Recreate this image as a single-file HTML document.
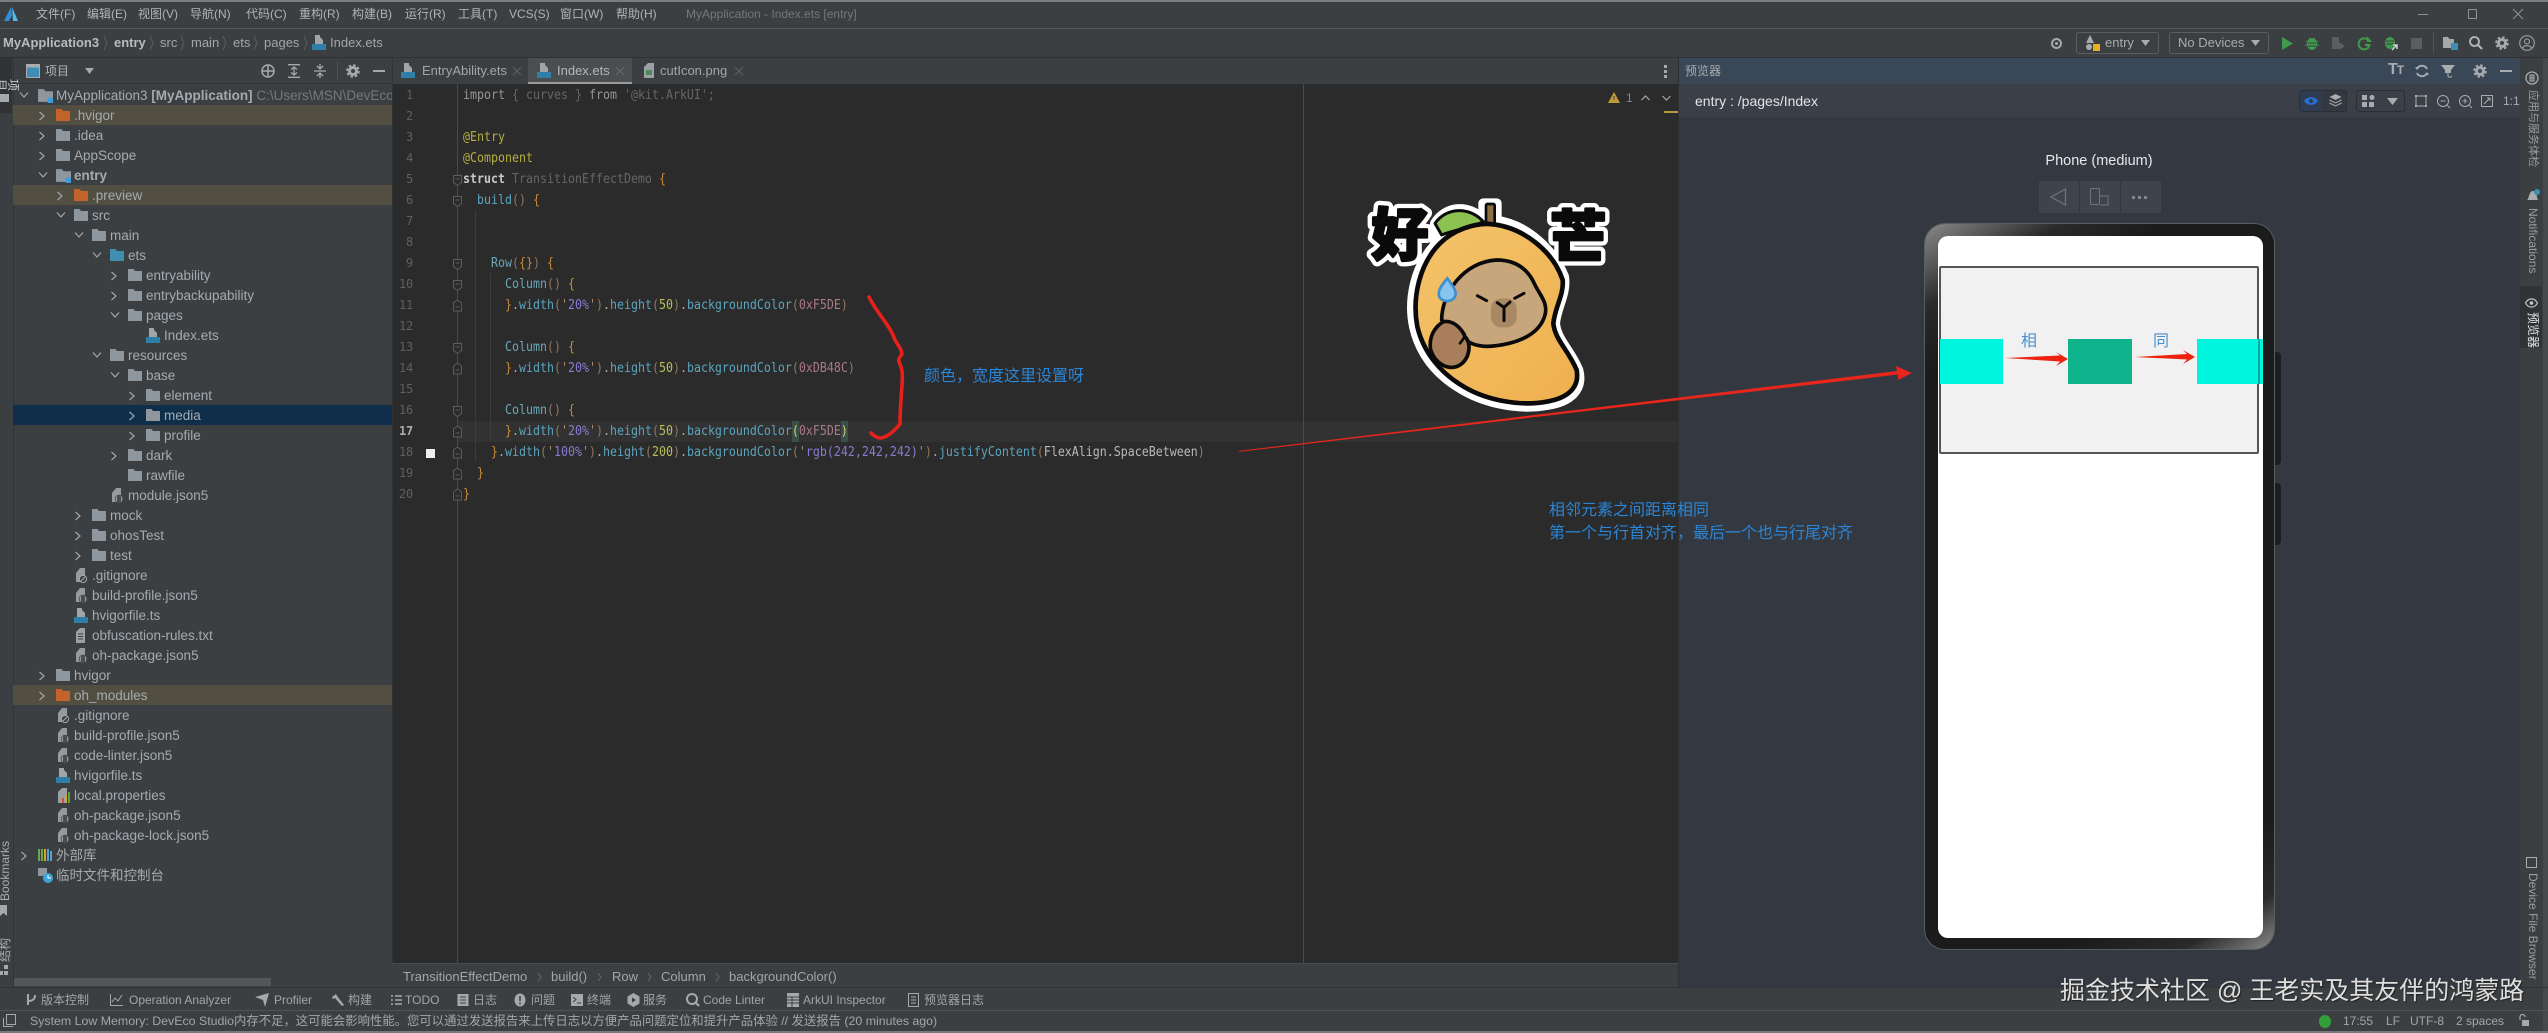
<!DOCTYPE html>
<html lang="zh"><head><meta charset="utf-8"><title>DevEco Studio</title>
<style>
*{box-sizing:border-box}
html,body{margin:0;padding:0}
body{width:2548px;height:1033px;position:relative;overflow:hidden;background:#3c3f41;font-family:"Liberation Sans","Noto Sans CJK SC",sans-serif;color:#a9b0b5}
.a{position:absolute;white-space:nowrap;line-height:20px}
.b{position:absolute}
svg{position:absolute;overflow:visible}
.m{font-size:12px;color:#b1b4b6;top:4px}
.c{font-size:13px;color:#a3a6a8;top:33px}
.tb{font-size:12px;color:#a3a6a8;top:990px}
#tree{position:absolute;left:13px;top:85px;width:379px}
.r{height:20px;position:relative;font-size:13.5px;line-height:22px;white-space:nowrap;color:#a4abb0}
.r.y{background:#524e41}
.r.s{background:#0e2e49}
.r>span{position:absolute;left:calc(var(--x) - 13px)}
.r>svg{left:calc(var(--x) - 31px);top:3px}
.r>svg.ch{left:calc(var(--x) - 49px);top:6px}
#code{position:absolute;left:463px;top:85px;font-family:"DejaVu Sans Mono","Liberation Mono",monospace;font-size:13px;line-height:21px;white-space:pre;transform:scaleX(.894);transform-origin:0 0;color:#a9a9a9}
#nums{position:absolute;left:392px;top:85px;width:21px;text-align:right;font-family:"DejaVu Sans Mono","Liberation Mono",monospace;font-size:12px;line-height:21px;color:#5d6063;letter-spacing:-.2px}
.o{color:#c98b3b}.t{color:#6ba6b6}.w{color:#5ba4bd}.p{color:#8a7bd0}.n{color:#b6c05a}.q{color:#b48a68}.h{color:#a97a86}.g{color:#94775e}.d{color:#666}.e{color:#b3ae3e}.f{color:#a8a8a8}
.vr{position:absolute;writing-mode:vertical-rl;text-orientation:sideways;white-space:nowrap;font-size:12px;line-height:14px;color:#9a9da0}
.vl{position:absolute;writing-mode:vertical-rl;text-orientation:sideways;transform:rotate(180deg);white-space:nowrap;font-size:12px;line-height:12px;color:#a9acae}
</style></head><body>

<svg width="0" height="0" style="position:absolute"><defs>
<symbol id="fd" viewBox="0 0 14 14"><path d="M0 1h5.500l1.500 2H14v10H0z" fill="#8e979d"/></symbol>
<symbol id="fo" viewBox="0 0 14 14"><path d="M0 1h5.500l1.500 2H14v10H0z" fill="#c4622c"/></symbol>
<symbol id="fb" viewBox="0 0 14 14"><path d="M0 1h5.500l1.500 2H14v10H0z" fill="#3f8fae"/></symbol>
<symbol id="fm" viewBox="0 0 14 14"><path d="M0 1h5.500l1.500 2H14v10H0z" fill="#8e979d"/><rect x="9" y="9" width="5.500" height="5.500" fill="#3d9bdc"/></symbol>
<symbol id="ets" viewBox="0 0 14 16"><path d="M3 0h5v9H3z M8 2l3 3v4H8z" fill="#a0a5a9"/><rect x="0" y="9" width="14" height="6" fill="#2f7ea5"/></symbol>
<symbol id="js" viewBox="0 0 14 16"><path d="M2 5l4-5h5v8H2z M2 8h9v6H2z" fill="#949a9e"/><circle cx="9" cy="11" r="4.200" fill="#4a4d4f"/><path d="M7 8.500c-1 1 0 2-1 2.500 1 .5 0 1.500 1 2.500M11 8.500c1 1 0 2 1 2.500-1 .5 0 1.500-1 2.500" stroke="#bbb" fill="none" stroke-width=".7"/></symbol>
<symbol id="gi" viewBox="0 0 14 16"><path d="M2 5l4-5h5v8H2z M2 8h9v6H2z" fill="#949a9e"/><circle cx="9" cy="11" r="3.600" fill="#3c3f41" stroke="#aaa"/><path d="M7 13l4-4" stroke="#aaa"/></symbol>
<symbol id="ts" viewBox="0 0 14 16"><path d="M3 0h5v9H3z M8 2l3 3v4H8z" fill="#a0a5a9"/><rect x="0" y="9" width="15" height="6" fill="#2f7ea5"/></symbol>
<symbol id="tx" viewBox="0 0 14 16"><path d="M2 4l4-4h5v15H2z" fill="#9aa0a4"/><path d="M4 6h5M4 8.500h5M4 11h5" stroke="#3c3f41"/></symbol>
<symbol id="lp" viewBox="0 0 14 16"><path d="M2 4l4-4h5v15H2z" fill="#9aa0a4"/><rect x="6" y="10" width="2" height="5" fill="#d0502b"/><rect x="9" y="7" width="2" height="8" fill="#e2a424"/><rect x="12" y="4" width="2" height="11" fill="#5aa63f"/></symbol>
<symbol id="png" viewBox="0 0 14 16"><path d="M2 4l4-4h6v15H2z" fill="#9aa0a4"/><rect x="4" y="7" width="6" height="5" fill="#4c8a5a"/></symbol>
<symbol id="cr" viewBox="0 0 8 10"><path d="M1.500 1l4.500 4-4.500 4" fill="none" stroke="#a3a6a8" stroke-width="1.200"/></symbol>
<symbol id="cd" viewBox="0 0 10 8"><path d="M1 1.500l4 4.500 4-4.500" fill="none" stroke="#a3a6a8" stroke-width="1.200"/></symbol>
<symbol id="gear" viewBox="0 0 14 14"><circle cx="7" cy="7" r="3.500" fill="none" stroke="#a6a9ab" stroke-width="3"/><circle cx="7" cy="7" r="5.800" fill="none" stroke="#a6a9ab" stroke-width="2" stroke-dasharray="2.500 2.050"/></symbol>
</defs></svg>

<!-- top chrome -->
<div class="b" style="left:0;top:0;width:2548px;height:2px;background:#7a7c7e"></div>
<div class="b" style="left:0;top:28px;width:2548px;height:1px;background:#555759"></div>
<div class="b" style="left:0;top:57px;width:2548px;height:1px;background:#2e3032"></div>

<svg style="left:3px;top:6px" width="17" height="17" viewBox="0 0 17 17"><path d="M8 1L1 15h5l3-6z" fill="#2f8fd8"/><path d="M9 1l6 14h-5z" fill="#58b7ea"/></svg>
<div class="a m" style="left:36px">文件(F)</div><div class="a m" style="left:87px">编辑(E)</div><div class="a m" style="left:138px">视图(V)</div><div class="a m" style="left:190px">导航(N)</div><div class="a m" style="left:246px">代码(C)</div><div class="a m" style="left:299px">重构(R)</div><div class="a m" style="left:352px">构建(B)</div><div class="a m" style="left:405px">运行(R)</div><div class="a m" style="left:458px">工具(T)</div><div class="a m" style="left:509px">VCS(S)</div><div class="a m" style="left:560px">窗口(W)</div><div class="a m" style="left:616px">帮助(H)</div>
<div class="a m" style="left:686px;color:#75787a">MyApplication - Index.ets [entry]</div>
<div class="b" style="left:2418px;top:14px;width:10px;height:1px;background:#8f9193"></div>
<div class="b" style="left:2468px;top:9px;width:9px;height:10px;border:1px solid #8f9193"></div>
<svg style="left:2513px;top:9px" width="10" height="10"><path d="M0 0l10 10M10 0L0 10" stroke="#8f9193"/></svg>

<div class="a c" style="left:3px;font-weight:bold;color:#b8babc">MyApplication3</div><div class="a c" style="left:114px;font-weight:bold;color:#b8babc">entry</div><div class="a c" style="left:160px">src</div><div class="a c" style="left:191px">main</div><div class="a c" style="left:233px">ets</div><div class="a c" style="left:264px">pages</div>
<svg style="left:312px;top:35px" width="14" height="16"><use href="#ets"/></svg><div class="a c" style="left:330px">Index.ets</div>
<svg style="left:103px;top:36px" width="6" height="14"><path d="M1 0l3 7-3 7" fill="none" stroke="#5a5d5f"/></svg><svg style="left:149px;top:36px" width="6" height="14"><path d="M1 0l3 7-3 7" fill="none" stroke="#5a5d5f"/></svg><svg style="left:180px;top:36px" width="6" height="14"><path d="M1 0l3 7-3 7" fill="none" stroke="#5a5d5f"/></svg><svg style="left:222px;top:36px" width="6" height="14"><path d="M1 0l3 7-3 7" fill="none" stroke="#5a5d5f"/></svg><svg style="left:253px;top:36px" width="6" height="14"><path d="M1 0l3 7-3 7" fill="none" stroke="#5a5d5f"/></svg><svg style="left:303px;top:36px" width="6" height="14"><path d="M1 0l3 7-3 7" fill="none" stroke="#5a5d5f"/></svg>

<!-- top right toolbar -->
<svg style="left:2050px;top:37px" width="13" height="13"><circle cx="6.500" cy="6.500" r="4.500" fill="none" stroke="#a6a9ab" stroke-width="2"/><circle cx="6.500" cy="6.500" r="1.500" fill="#a6a9ab"/></svg>
<div class="b" style="left:2076px;top:32px;width:83px;height:22px;border:1px solid #5b5e60;border-radius:3px"></div>
<svg style="left:2085px;top:35px" width="16" height="17"><path d="M5 0l4 8H1z" fill="#a9acae"/><circle cx="4" cy="12" r="3" fill="#a9acae"/><rect x="8" y="9" width="7" height="7" fill="#e8b01f"/></svg>
<div class="a" style="left:2105px;top:33px;font-size:13px;color:#a9acae">entry</div>
<svg style="left:2141px;top:40px" width="10" height="7"><path d="M0 0h9L4.500 6z" fill="#a9acae"/></svg>
<div class="b" style="left:2169px;top:32px;width:100px;height:22px;border:1px solid #5b5e60;border-radius:3px"></div>
<div class="a" style="left:2178px;top:33px;font-size:13px;color:#a9acae">No Devices</div>
<svg style="left:2251px;top:40px" width="10" height="7"><path d="M0 0h9L4.500 6z" fill="#a9acae"/></svg>
<svg style="left:2282px;top:37px" width="11" height="13"><path d="M0 0l11 6.500L0 13z" fill="#3f9a4b"/></svg>
<svg style="left:2305px;top:36px" width="14" height="14"><ellipse cx="7" cy="8" rx="5" ry="6" fill="#3f9a4b"/><path d="M1 5l3 2M13 5l-3 2M0 9h3M14 9h-3M4 2l2 2M10 2L8 4" stroke="#3f9a4b"/><path d="M3 7h8M3 10h8" stroke="#3c3f41"/></svg>
<svg style="left:2331px;top:36px" width="15" height="15"><path d="M1 1h7v12H1z" fill="#5b5e60"/><path d="M8 6l6 4-6 4z" fill="#5b5e60"/></svg>
<svg style="left:2357px;top:36px" width="15" height="15"><path d="M11 4A5.500 5.500 0 1 0 12.500 9H8" fill="none" stroke="#3f9a4b" stroke-width="2"/><path d="M10 0v6h5z" fill="#3f9a4b"/></svg>
<svg style="left:2384px;top:36px" width="15" height="15"><ellipse cx="6" cy="7" rx="5" ry="6" fill="#3f9a4b"/><path d="M2 5h8M2 8h8" stroke="#3c3f41"/><path d="M8 14l5-5M9 9h4v4" stroke="#d0d2d3" fill="none" stroke-width="1.500"/></svg>
<div class="b" style="left:2411px;top:38px;width:11px;height:11px;background:#5b5e60"></div>
<div class="b" style="left:2433px;top:32px;width:1px;height:21px;background:#505355"></div>
<svg style="left:2443px;top:36px" width="15" height="14"><path d="M0 1h5l1.500 2H11v9H0z" fill="#a6a9ab"/><rect x="8" y="7" width="7" height="7" fill="#3d8db5"/></svg>
<svg style="left:2469px;top:36px" width="14" height="14"><circle cx="5.500" cy="5.500" r="4.500" fill="none" stroke="#b4b6b8" stroke-width="1.800"/><path d="M9 9l4 4" stroke="#b4b6b8" stroke-width="2"/></svg>
<svg style="left:2495px;top:36px" width="14" height="14"><use href="#gear"/></svg>
<svg style="left:2519px;top:35px" width="16" height="16"><circle cx="8" cy="8" r="7.300" fill="none" stroke="#a6a9ab" stroke-width="1"/><circle cx="8" cy="6.500" r="2.500" fill="none" stroke="#a6a9ab"/><path d="M3.500 13c1-3 8-3 9 0" fill="none" stroke="#a6a9ab"/></svg>

<!-- left stripe -->
<div class="b" style="left:13px;top:58px;width:1px;height:930px;background:#323436"></div>
<div class="b" style="left:0;top:58px;width:12px;height:55px;background:#303234"></div>
<div class="a" style="left:-1px;top:62px;width:11px;font-size:12px;line-height:12px;color:#c8cacb;white-space:normal;transform:rotate(90deg) translate(8px,-1px);transform-origin:5px 14px">项目</div>
<div class="b" style="left:0;top:94px;width:9px;height:8px;background:#a6a9ab"></div>
<div class="vl" style="left:-1px;top:843px;height:58px">Bookmarks</div>
<svg style="left:0;top:905px" width="8" height="12"><path d="M0 0h7v11L3.500 8 0 11z" fill="#a6a9ab"/></svg>
<div class="vl" style="left:-1px;top:938px;height:24px">结构</div>
<svg style="left:0;top:965px" width="8" height="11"><rect x="4" y="0" width="4" height="4" fill="#a6a9ab"/><rect x="0" y="6" width="3" height="4" fill="#a6a9ab"/><rect x="4" y="6" width="4" height="4" fill="#a6a9ab"/></svg>

<!-- project header -->
<div class="b" style="left:14px;top:83px;width:378px;height:1px;background:#323436"></div>
<svg style="left:26px;top:64px" width="14" height="14"><rect x=".5" y=".5" width="13" height="13" fill="#3d8db5" stroke="#a9acae"/><rect x=".5" y=".5" width="13" height="3" fill="#a9acae"/></svg>
<div class="a" style="left:45px;top:61px;font-size:12px;color:#b1b4b6">项目</div>
<svg style="left:85px;top:68px" width="9" height="7"><path d="M0 0h9L4.500 6z" fill="#a6a9ab"/></svg>
<svg style="left:261px;top:64px" width="14" height="14"><circle cx="7" cy="7" r="6" fill="none" stroke="#a6a9ab" stroke-width="1.500"/><path d="M7 1v12M1 7h12" stroke="#a6a9ab" stroke-width="1.500"/></svg>
<svg style="left:288px;top:64px" width="12" height="14"><path d="M0 .7h12M0 13.300h12M6 3v8M3 5.500L6 3l3 2.500M3 8.500L6 11l3-2.500" stroke="#a6a9ab" fill="none" stroke-width="1.300"/></svg>
<svg style="left:314px;top:64px" width="12" height="14"><path d="M0 7h12M6 0v4M6 10v4M3 2l3 3 3-3M3 12l3-3 3 3" stroke="#a6a9ab" fill="none" stroke-width="1.300"/></svg>
<div class="b" style="left:337px;top:62px;width:1px;height:18px;background:#4e5153"></div>
<svg style="left:346px;top:64px" width="14" height="14"><use href="#gear"/></svg>
<div class="b" style="left:373px;top:70px;width:12px;height:2px;background:#a6a9ab"></div>

<!-- tree -->
<div id="tree">
<div class="r" style="--x:56px"><svg class="ch" style="left:6px" width="10" height="8"><use href="#cd"/></svg><svg style="left:25px" width="15" height="15"><use href="#fm"/></svg><span>MyApplication3 <b>[MyApplication]</b> <span style="color:#75787a">C:\Users\MSN\DevEcoS</span></span></div>
<div class="r y" style="--x:74px"><svg class="ch" width="8" height="10"><use href="#cr"/></svg><svg width="14" height="14"><use href="#fo"/></svg><span>.hvigor</span></div>
<div class="r" style="--x:74px"><svg class="ch" width="8" height="10"><use href="#cr"/></svg><svg width="14" height="14"><use href="#fd"/></svg><span>.idea</span></div>
<div class="r" style="--x:74px"><svg class="ch" width="8" height="10"><use href="#cr"/></svg><svg width="14" height="14"><use href="#fd"/></svg><span>AppScope</span></div>
<div class="r" style="--x:74px"><svg class="ch" width="10" height="8"><use href="#cd"/></svg><svg width="15" height="15"><use href="#fm"/></svg><span><b>entry</b></span></div>
<div class="r y" style="--x:92px"><svg class="ch" width="8" height="10"><use href="#cr"/></svg><svg width="14" height="14"><use href="#fo"/></svg><span>.preview</span></div>
<div class="r" style="--x:92px"><svg class="ch" width="10" height="8"><use href="#cd"/></svg><svg width="14" height="14"><use href="#fd"/></svg><span>src</span></div>
<div class="r" style="--x:110px"><svg class="ch" width="10" height="8"><use href="#cd"/></svg><svg width="14" height="14"><use href="#fd"/></svg><span>main</span></div>
<div class="r" style="--x:128px"><svg class="ch" width="10" height="8"><use href="#cd"/></svg><svg width="14" height="14"><use href="#fb"/></svg><span>ets</span></div>
<div class="r" style="--x:146px"><svg class="ch" width="8" height="10"><use href="#cr"/></svg><svg width="14" height="14"><use href="#fd"/></svg><span>entryability</span></div>
<div class="r" style="--x:146px"><svg class="ch" width="8" height="10"><use href="#cr"/></svg><svg width="14" height="14"><use href="#fd"/></svg><span>entrybackupability</span></div>
<div class="r" style="--x:146px"><svg class="ch" width="10" height="8"><use href="#cd"/></svg><svg width="14" height="14"><use href="#fd"/></svg><span>pages</span></div>
<div class="r" style="--x:164px"><svg width="14" height="16"><use href="#ets"/></svg><span>Index.ets</span></div>
<div class="r" style="--x:128px"><svg class="ch" width="10" height="8"><use href="#cd"/></svg><svg width="14" height="14"><use href="#fd"/></svg><span>resources</span></div>
<div class="r" style="--x:146px"><svg class="ch" width="10" height="8"><use href="#cd"/></svg><svg width="14" height="14"><use href="#fd"/></svg><span>base</span></div>
<div class="r" style="--x:164px"><svg class="ch" width="8" height="10"><use href="#cr"/></svg><svg width="14" height="14"><use href="#fd"/></svg><span>element</span></div>
<div class="r s" style="--x:164px"><svg class="ch" width="8" height="10"><use href="#cr"/></svg><svg width="14" height="14"><use href="#fd"/></svg><span>media</span></div>
<div class="r" style="--x:164px"><svg class="ch" width="8" height="10"><use href="#cr"/></svg><svg width="14" height="14"><use href="#fd"/></svg><span>profile</span></div>
<div class="r" style="--x:146px"><svg class="ch" width="8" height="10"><use href="#cr"/></svg><svg width="14" height="14"><use href="#fd"/></svg><span>dark</span></div>
<div class="r" style="--x:146px"><svg width="14" height="14"><use href="#fd"/></svg><span>rawfile</span></div>
<div class="r" style="--x:128px"><svg width="14" height="16"><use href="#js"/></svg><span>module.json5</span></div>
<div class="r" style="--x:110px"><svg class="ch" width="8" height="10"><use href="#cr"/></svg><svg width="14" height="14"><use href="#fd"/></svg><span>mock</span></div>
<div class="r" style="--x:110px"><svg class="ch" width="8" height="10"><use href="#cr"/></svg><svg width="14" height="14"><use href="#fd"/></svg><span>ohosTest</span></div>
<div class="r" style="--x:110px"><svg class="ch" width="8" height="10"><use href="#cr"/></svg><svg width="14" height="14"><use href="#fd"/></svg><span>test</span></div>
<div class="r" style="--x:92px"><svg width="14" height="16"><use href="#gi"/></svg><span>.gitignore</span></div>
<div class="r" style="--x:92px"><svg width="14" height="16"><use href="#js"/></svg><span>build-profile.json5</span></div>
<div class="r" style="--x:92px"><svg width="14" height="16"><use href="#ts"/></svg><span>hvigorfile.ts</span></div>
<div class="r" style="--x:92px"><svg width="14" height="16"><use href="#tx"/></svg><span>obfuscation-rules.txt</span></div>
<div class="r" style="--x:92px"><svg width="14" height="16"><use href="#js"/></svg><span>oh-package.json5</span></div>
<div class="r" style="--x:74px"><svg class="ch" width="8" height="10"><use href="#cr"/></svg><svg width="14" height="14"><use href="#fd"/></svg><span>hvigor</span></div>
<div class="r y" style="--x:74px"><svg class="ch" width="8" height="10"><use href="#cr"/></svg><svg width="14" height="14"><use href="#fo"/></svg><span>oh_modules</span></div>
<div class="r" style="--x:74px"><svg width="14" height="16"><use href="#gi"/></svg><span>.gitignore</span></div>
<div class="r" style="--x:74px"><svg width="14" height="16"><use href="#js"/></svg><span>build-profile.json5</span></div>
<div class="r" style="--x:74px"><svg width="14" height="16"><use href="#js"/></svg><span>code-linter.json5</span></div>
<div class="r" style="--x:74px"><svg width="14" height="16"><use href="#ts"/></svg><span>hvigorfile.ts</span></div>
<div class="r" style="--x:74px"><svg width="14" height="16"><use href="#lp"/></svg><span>local.properties</span></div>
<div class="r" style="--x:74px"><svg width="14" height="16"><use href="#js"/></svg><span>oh-package.json5</span></div>
<div class="r" style="--x:74px"><svg width="14" height="16"><use href="#js"/></svg><span>oh-package-lock.json5</span></div>
<div class="r" style="--x:56px"><svg class="ch" width="8" height="10"><use href="#cr"/></svg><svg width="15" height="14" viewBox="0 0 15 14"><path d="M1 1v12M4 1v12" stroke="#6aa84f" stroke-width="2"/><path d="M7 1v12" stroke="#d5a330" stroke-width="2"/><path d="M10 1v12M13 3v10" stroke="#5a9fc5" stroke-width="2"/></svg><span>外部库</span></div>
<div class="r" style="--x:56px"><svg width="15" height="15" viewBox="0 0 15 15"><path d="M0 0h9v8H0z" fill="#8e979d"/><circle cx="10" cy="10" r="5" fill="#3ca4dc"/><path d="M10 7v3h3" stroke="#fff" fill="none"/></svg><span>临时文件和控制台</span></div>
</div>
<div class="b" style="left:14px;top:978px;width:257px;height:8px;background:#54575a"></div>

<!-- editor -->
<div class="b" style="left:392px;top:58px;width:1286px;height:26px;background:#3c3f41"></div>
<div class="b" style="left:392px;top:84px;width:1286px;height:880px;background:#2b2b2b"></div>
<div class="b" style="left:392px;top:58px;width:1px;height:930px;background:#323436"></div>
<div class="b" style="left:528px;top:58px;width:104px;height:26px;background:#4b4e50"></div>
<div class="b" style="left:528px;top:82px;width:104px;height:2px;background:#9a9c9e"></div>
<svg style="left:401px;top:63px" width="14" height="16"><use href="#ets"/></svg><div class="a" style="left:422px;top:61px;font-size:13px;color:#a3a6a8">EntryAbility.ets</div>
<svg style="left:537px;top:63px" width="14" height="16"><use href="#ets"/></svg><div class="a" style="left:557px;top:61px;font-size:13px;color:#b5b7b9">Index.ets</div>
<svg style="left:642px;top:63px" width="14" height="16"><use href="#png"/></svg><div class="a" style="left:660px;top:61px;font-size:13px;color:#a3a6a8">cutIcon.png</div>
<svg style="left:513px;top:67px" width="8" height="8"><path d="M0 0l8 8M8 0L0 8" stroke="#5e6163"/></svg><svg style="left:616px;top:67px" width="8" height="8"><path d="M0 0l8 8M8 0L0 8" stroke="#66696b"/></svg><svg style="left:735px;top:67px" width="8" height="8"><path d="M0 0l8 8M8 0L0 8" stroke="#5e6163"/></svg>
<div class="b" style="left:1664px;top:65px;width:3px;height:3px;background:#a6a9ab;box-shadow:0 5px 0 #a6a9ab,0 10px 0 #a6a9ab"></div>

<div class="b" style="left:458px;top:421px;width:1220px;height:21px;background:#323232"></div>
<div class="b" style="left:792px;top:421px;width:7px;height:21px;background:#3a4f4a"></div>
<div class="b" style="left:841px;top:421px;width:7px;height:21px;background:#3a4f4a"></div>
<div class="b" style="left:457px;top:84px;width:1px;height:880px;background:#484a4b"></div>
<div class="b" style="left:475px;top:210px;width:1px;height:252px;background:#3c3c3c"></div>
<div class="b" style="left:490px;top:273px;width:1px;height:168px;background:#3c3c3c"></div>
<div class="b" style="left:1303px;top:84px;width:1px;height:880px;background:#484a4b"></div>
<div class="b" style="left:426px;top:449px;width:9px;height:9px;background:#eeeeee"></div>
<svg style="left:453px;top:175px" width="9" height="330" fill="#2b2b2b" stroke="#5a5c5d"><path d="M.5 .5h8v7l-4 3-4-3z M.5 21.500h8v7l-4 3-4-3z M.5 84.500h8v7l-4 3-4-3z M.5 105.500h8v7l-4 3-4-3z M4.500 125l4 3v8h-8v-8z M.5 168.500h8v7l-4 3-4-3z M4.500 188l4 3v8h-8v-8z M.5 231.500h8v7l-4 3-4-3z M4.500 251l4 3v8h-8v-8z M4.500 272l4 3v8h-8v-8z M4.500 293l4 3v8h-8v-8z M4.500 314l4 3v8h-8v-8z"/><path d="M2.500 4h4M2.500 25h4M2.500 88h4M2.500 109h4M2.500 132h4M2.500 172h4M2.500 195h4M2.500 235h4M2.500 258h4M2.500 279h4M2.500 300h4M2.500 321h4"/></svg>

<div id="nums">1<br>2<br>3<br>4<br>5<br>6<br>7<br>8<br>9<br>10<br>11<br>12<br>13<br>14<br>15<br>16<br><span style="color:#a8abad;font-weight:bold">17</span><br>18<br>19<br>20</div>

<div id="code"><span style="color:#969696">import</span> <span class="d">{ curves }</span> <span style="color:#969696">from</span> <span class="d">'@kit.ArkUI';</span>

<span class="e">@Entry</span>
<span class="e">@Component</span>
<b style="color:#c8c8c8">struct</b> <span class="d">TransitionEffectDemo</span> <span class="o">{</span>
  <span class="w">build</span><span class="g">()</span> <span class="o">{</span>


    <span class="t">Row</span><span class="g">(</span><span class="o">{}</span><span class="g">)</span> <span class="o">{</span>
      <span class="t">Column</span><span class="g">()</span> <span class="o">{</span>
      <span class="o">}</span><span class="f">.</span><span class="w">width</span><span class="g">(</span><span class="q">'</span><span class="p">20%</span><span class="q">'</span><span class="g">)</span><span class="f">.</span><span class="w">height</span><span class="g">(</span><span class="n">50</span><span class="g">)</span><span class="f">.</span><span class="w">backgroundColor</span><span class="g">(</span><span class="h">0xF5DE</span><span class="g">)</span>

      <span class="t">Column</span><span class="g">()</span> <span class="o">{</span>
      <span class="o">}</span><span class="f">.</span><span class="w">width</span><span class="g">(</span><span class="q">'</span><span class="p">20%</span><span class="q">'</span><span class="g">)</span><span class="f">.</span><span class="w">height</span><span class="g">(</span><span class="n">50</span><span class="g">)</span><span class="f">.</span><span class="w">backgroundColor</span><span class="g">(</span><span class="h">0xDB48C</span><span class="g">)</span>

      <span class="t">Column</span><span class="g">()</span> <span class="o">{</span>
      <span class="o">}</span><span class="f">.</span><span class="w">width</span><span class="g">(</span><span class="q">'</span><span class="p">20%</span><span class="q">'</span><span class="g">)</span><span class="f">.</span><span class="w">height</span><span class="g">(</span><span class="n">50</span><span class="g">)</span><span class="f">.</span><span class="w">backgroundColor</span><span style="color:#d6d66a">(</span><span class="h">0xF5DE</span><span style="color:#d6d66a">)</span>
    <span class="o">}</span><span class="f">.</span><span class="w">width</span><span class="g">(</span><span class="q">'</span><span class="p">100%</span><span class="q">'</span><span class="g">)</span><span class="f">.</span><span class="w">height</span><span class="g">(</span><span class="n">200</span><span class="g">)</span><span class="f">.</span><span class="w">backgroundColor</span><span class="g">(</span><span class="q">'</span><span class="p">rgb(242,242,242)</span><span class="q">'</span><span class="g">)</span><span class="f">.</span><span class="w">justifyContent</span><span class="g">(</span><span class="f" style="color:#b9b9b9">FlexAlign.SpaceBetween</span><span class="g">)</span>
  <span class="o">}</span>
<span class="o">}</span></div>

<svg style="left:1608px;top:92px" width="12" height="11"><path d="M6 0l6 11H0z" fill="#c29a3a"/><path d="M6 4v4" stroke="#3c3f41"/></svg>
<div class="a" style="left:1626px;top:88px;font-size:12px;color:#85888a">1</div>
<svg style="left:1641px;top:95px" width="9" height="6"><path d="M.5 5L4.500 1l4 4" fill="none" stroke="#a6a9ab" stroke-width="1.200"/></svg>
<svg style="left:1662px;top:95px" width="9" height="6"><path d="M.5 1l4 4 4-4" fill="none" stroke="#a6a9ab" stroke-width="1.200"/></svg>
<div class="b" style="left:1664px;top:111px;width:14px;height:2px;background:#b89a3a"></div>

<div class="a" style="left:924px;top:366px;font-size:16px;line-height:22px;color:#2a86d8">颜色，宽度这里设置呀</div>

<!-- editor breadcrumb -->
<div class="b" style="left:392px;top:963px;width:1286px;height:25px;background:#3c3f41;border-top:1px solid #4a4c4e"></div>
<div class="a" style="left:403px;top:967px;font-size:13px;color:#a3a6a8">TransitionEffectDemo</div><div class="a" style="left:551px;top:967px;font-size:13px;color:#a3a6a8">build()</div><div class="a" style="left:612px;top:967px;font-size:13px;color:#a3a6a8">Row</div><div class="a" style="left:661px;top:967px;font-size:13px;color:#a3a6a8">Column</div><div class="a" style="left:729px;top:967px;font-size:13px;color:#a3a6a8">backgroundColor()</div>
<svg style="left:538px;top:973px" width="4" height="8"><path d="M0 0l3 4-3 4" fill="none" stroke="#66696b"/></svg><svg style="left:598px;top:973px" width="4" height="8"><path d="M0 0l3 4-3 4" fill="none" stroke="#66696b"/></svg><svg style="left:648px;top:973px" width="4" height="8"><path d="M0 0l3 4-3 4" fill="none" stroke="#66696b"/></svg><svg style="left:716px;top:973px" width="4" height="8"><path d="M0 0l3 4-3 4" fill="none" stroke="#66696b"/></svg>

<!-- preview -->
<div class="b" style="left:1678px;top:58px;width:842px;height:26px;background:#3a4757"></div>
<div class="b" style="left:1678px;top:84px;width:842px;height:33px;background:#3b4048"></div>
<div class="b" style="left:1678px;top:117px;width:842px;height:871px;background:#343941"></div>
<div class="b" style="left:1678px;top:58px;width:1px;height:930px;background:#2e3032"></div>
<div class="a" style="left:1685px;top:61px;font-size:12px;color:#a9acae">预览器</div>
<div class="a" style="left:1695px;top:91px;font-size:14px;color:#e2e4e6">entry : /pages/Index</div>

<div class="a" style="left:2388px;top:60px;font-size:16px;font-weight:bold;color:#a9acae;letter-spacing:-1px">T<span style="font-size:12px">T</span></div>
<svg style="left:2415px;top:64px" width="14" height="14"><path d="M12 5A5.500 5.500 0 0 0 2 5M2 9a5.500 5.500 0 0 0 10 0" fill="none" stroke="#a9acae" stroke-width="2"/><path d="M0 3l4 0-2 3zM14 11h-4l2-3z" fill="#a9acae"/></svg>
<svg style="left:2441px;top:64px" width="14" height="16"><path d="M0 1h14l-4 5v3H4V6z" fill="#a9acae"/><path d="M7 9v3c0 2 3 1 4 0" fill="none" stroke="#a9acae"/></svg>
<svg style="left:2473px;top:64px" width="14" height="14"><use href="#gear"/></svg>
<div class="b" style="left:2500px;top:70px;width:12px;height:2px;background:#a9acae"></div>

<div class="b" style="left:2299px;top:90px;width:48px;height:22px;border:1px solid #2b2f35;border-radius:3px;background:#343941"></div>
<div class="b" style="left:2300px;top:91px;width:22px;height:20px;background:#2f3d52"></div>
<svg style="left:2304px;top:94px" width="14" height="14"><path d="M0 7c3-5 11-5 14 0-3 5-11 5-14 0z" fill="#2a6fd0"/><circle cx="7" cy="7" r="2" fill="#2f3d52"/></svg>
<svg style="left:2329px;top:94px" width="13" height="14"><path d="M6.500 0l6 3-6 3-6-3z" fill="#a9acae"/><path d="M.5 6l6 3 6-3M.5 9l6 3 6-3" fill="none" stroke="#a9acae"/></svg>
<div class="b" style="left:2356px;top:90px;width:49px;height:22px;border:1px solid #2b2f35;border-radius:3px"></div>
<svg style="left:2362px;top:95px" width="13" height="12"><rect width="5" height="5" fill="#a9acae"/><circle cx="10" cy="2.500" r="2.500" fill="#a9acae"/><rect y="7" width="5" height="5" fill="#a9acae"/><rect x="7" y="7" width="5" height="5" fill="#a9acae"/></svg>
<svg style="left:2387px;top:98px" width="11" height="7"><path d="M0 0h11L5.500 7z" fill="#a9acae"/></svg>
<svg style="left:2415px;top:95px" width="12" height="12"><rect x="1" y="1" width="10" height="10" fill="none" stroke="#a9acae"/><path d="M0 0h2v2H0zM10 0h2v2h-2zM0 10h2v2H0zM10 10h2v2h-2z" fill="#a9acae"/></svg>
<svg style="left:2437px;top:95px" width="13" height="13"><circle cx="6" cy="6" r="5.500" fill="none" stroke="#a9acae"/><path d="M3.500 6h5M10 10l3 3" stroke="#a9acae"/></svg>
<svg style="left:2459px;top:95px" width="13" height="13"><circle cx="6" cy="6" r="5.500" fill="none" stroke="#a9acae"/><path d="M3.500 6h5M6 3.500v5M10 10l3 3" stroke="#a9acae"/></svg>
<svg style="left:2481px;top:95px" width="12" height="12"><rect x=".5" y=".5" width="11" height="11" fill="none" stroke="#a9acae"/><path d="M3 9l6-6M9 3v3M9 3H6" stroke="#a9acae" fill="none"/></svg>
<div class="a" style="left:2503px;top:91px;font-size:12px;color:#a9acae">1:1</div>

<div class="a" style="left:2019px;top:151px;width:160px;text-align:center;font-size:14.500px;color:#e6e8ea">Phone (medium)</div>
<div class="b" style="left:2039px;top:181px;width:122px;height:32px;background:#3f444c;border-radius:2px"></div>
<div class="b" style="left:2079px;top:181px;width:1px;height:32px;background:#343941"></div>
<div class="b" style="left:2120px;top:181px;width:1px;height:32px;background:#343941"></div>
<svg style="left:2050px;top:188px" width="17" height="18"><path d="M15.500 1v16L1 9z" fill="none" stroke="#70757c" stroke-width="1.200"/></svg>
<svg style="left:2090px;top:188px" width="20" height="18"><rect x=".5" y=".5" width="9" height="16" rx="1.500" fill="none" stroke="#70757c"/><path d="M10 8h8v9h-8" fill="none" stroke="#70757c"/></svg>
<div class="b" style="left:2132px;top:196px;width:3px;height:3px;background:#808590;box-shadow:6px 0 0 #808590,12px 0 0 #808590"></div>

<!-- phone -->
<div class="b" style="left:2274px;top:352px;width:7px;height:113px;background:#1c1d1f;border-radius:0 4px 4px 0"></div>
<div class="b" style="left:2274px;top:483px;width:7px;height:62px;background:#1c1d1f;border-radius:0 4px 4px 0"></div>
<div class="b" style="left:1925px;top:224px;width:349px;height:725px;border-radius:20px;background:linear-gradient(148deg,#8a8a8a 0,#2a2a2a 9%,#1b1b1b 16%,#1b1b1b 86%,#2a2a2a 94%,#8a8a8a 100%);box-shadow:0 0 0 1px #5a5d61"></div>
<div class="b" style="left:1938px;top:236px;width:325px;height:702px;border-radius:10px;background:#fff;overflow:hidden">
<div class="b" style="left:1px;top:30px;width:320px;height:188px;background:#f1f1f1;border:2px solid #555;border-radius:2px"></div>
<div class="b" style="left:2px;top:103px;width:63px;height:45px;background:#00f5de"></div>
<div class="b" style="left:130px;top:103px;width:64px;height:45px;background:#10b48c"></div>
<div class="b" style="left:259px;top:103px;width:66px;height:45px;background:#00f5de"></div>
<div class="b" style="left:320px;top:103px;width:2px;height:45px;background:#13a89c"></div>
</div>
<div class="a" style="left:2021px;top:332px;font-size:16px;color:#4a90d0">相</div>
<div class="a" style="left:2153px;top:332px;font-size:16px;color:#4a90d0">同</div>

<div class="a" style="left:1549px;top:501px;font-size:16px;color:#2a86d8">相邻元素之间距离相同</div>
<div class="a" style="left:1549px;top:524px;font-size:16px;color:#2a86d8">第一个与行首对齐，最后一个也与行尾对齐</div>

<!-- right stripe -->
<div class="b" style="left:2520px;top:58px;width:23px;height:930px;background:#3c3f41"></div>
<div class="b" style="left:2543px;top:58px;width:5px;height:975px;background:#46484a"></div>
<div class="b" style="left:2520px;top:286px;width:22px;height:62px;background:#303234"></div>
<svg style="left:2525px;top:70px" width="14" height="15"><circle cx="7" cy="8" r="6" fill="none" stroke="#a9acae" stroke-width="1.300"/><path d="M5 5h4v6H5zM5 8h4M7 5v6" stroke="#a9acae" fill="none"/></svg>
<div class="vr" style="left:2526px;top:90px;font-size:11px">应用与服务体检</div>
<svg style="left:2526px;top:189px" width="14" height="14"><path d="M1 11c2-1 2-9 6-9s4 8 5 9z" fill="#a9acae"/><circle cx="11" cy="3" r="3" fill="#3d8db5"/></svg>
<div class="vr" style="left:2526px;top:208px">Notifications</div>
<svg style="left:2525px;top:298px" width="13" height="10"><path d="M.5 5c3-5.500 9-5.500 12 0-3 5.500-9 5.500-12 0z" fill="none" stroke="#c4c6c8" stroke-width="1.200"/><circle cx="6.500" cy="5" r="1.800" fill="#c4c6c8"/></svg>
<div class="vr" style="left:2526px;top:312px;color:#e0e2e4">预览器</div>
<svg style="left:2526px;top:857px" width="11" height="11"><rect x=".5" y=".5" width="10" height="10" fill="none" stroke="#a9acae"/></svg>
<div class="vr" style="left:2526px;top:873px">Device File Browser</div>

<!-- bottom bars -->
<div class="b" style="left:0;top:987px;width:2548px;height:1px;background:#323436"></div>
<div class="b" style="left:0;top:1010px;width:2548px;height:1px;background:#505355"></div>
<div class="b" style="left:0;top:1031px;width:2548px;height:2px;background:#77797b"></div>
<svg style="left:26px;top:993px" width="11" height="13"><path d="M2 1v11M2 8c5 0 7-2 7-6" fill="none" stroke="#a6a9ab" stroke-width="2"/></svg><div class="a tb" style="left:41px">版本控制</div>
<svg style="left:110px;top:994px" width="13" height="12"><path d="M.5 0v11.500H13M2 8l3-4 3 3 4-6" fill="none" stroke="#a6a9ab"/></svg><div class="a tb" style="left:129px">Operation Analyzer</div>
<svg style="left:255px;top:993px" width="14" height="14"><path d="M0 4l14-4-4 14-2-7z" fill="#a6a9ab"/></svg><div class="a tb" style="left:274px">Profiler</div>
<svg style="left:331px;top:993px" width="14" height="14"><path d="M1 4l4-3 1 2 7 9-2 1-7-8-2 1z" fill="#a6a9ab"/></svg><div class="a tb" style="left:348px">构建</div>
<svg style="left:391px;top:995px" width="11" height="10"><path d="M0 1h2M4 1h7M0 5h2M4 5h7M0 9h2M4 9h7" stroke="#a6a9ab" stroke-width="1.500"/></svg><div class="a tb" style="left:405px">TODO</div>
<svg style="left:457px;top:993px" width="12" height="14"><rect x=".5" y="1" width="11" height="12" fill="#a6a9ab"/><path d="M3 4h6M3 7h6M3 10h6" stroke="#3c3f41"/></svg><div class="a tb" style="left:473px">日志</div>
<svg style="left:514px;top:993px" width="12" height="14"><ellipse cx="6" cy="7" rx="5.500" ry="6.500" fill="#a6a9ab"/><path d="M6 3v5M6 9.500v2" stroke="#3c3f41" stroke-width="1.500"/></svg><div class="a tb" style="left:531px">问题</div>
<svg style="left:571px;top:994px" width="12" height="12"><rect width="12" height="12" fill="#a6a9ab"/><path d="M2 3l3 2.500L2 8M6 9h4" stroke="#3c3f41" fill="none"/></svg><div class="a tb" style="left:587px">终端</div>
<svg style="left:627px;top:993px" width="13" height="14"><path d="M6.500 0l6 3.500v7L6.500 14l-6-3.500v-7z" fill="#a6a9ab"/><path d="M5 4.500l4 2.500-4 2.500z" fill="#3c3f41"/></svg><div class="a tb" style="left:643px">服务</div>
<svg style="left:686px;top:993px" width="14" height="14"><circle cx="6" cy="6" r="5" fill="none" stroke="#a6a9ab" stroke-width="2"/><path d="M9 9l4 4" stroke="#a6a9ab" stroke-width="2"/></svg><div class="a tb" style="left:703px">Code Linter</div>
<svg style="left:787px;top:993px" width="12" height="14"><rect width="12" height="14" fill="#a6a9ab"/><path d="M0 4h12M0 7h12M0 10h12M5 4v10" stroke="#3c3f41"/></svg><div class="a tb" style="left:803px">ArkUI Inspector</div>
<svg style="left:908px;top:993px" width="12" height="14"><rect x=".5" y=".5" width="10" height="13" fill="none" stroke="#a6a9ab"/><path d="M3 4h5M3 7h5M3 10h5" stroke="#a6a9ab"/></svg><div class="a tb" style="left:924px">预览器日志</div>

<svg style="left:3px;top:1014px" width="13" height="13"><rect x="3.500" y=".5" width="9" height="10" fill="none" stroke="#a6a9ab"/><path d="M.5 4v8.500H10" fill="none" stroke="#a6a9ab"/></svg>
<div class="a" style="left:30px;top:1011px;font-size:12.370px;color:#a3a6a8">System Low Memory: DevEco Studio内存不足，这可能会影响性能。您可以通过发送报告来上传日志以方便产品问题定位和提升产品体验 // 发送报告 (20 minutes ago)</div>
<div class="b" style="left:2319px;top:1015px;width:12px;height:13px;border-radius:50%;background:#339e3a"></div>
<div class="a" style="left:2343px;top:1011px;font-size:12px;color:#a3a6a8">17:55</div><div class="a" style="left:2386px;top:1011px;font-size:12px;color:#a3a6a8">LF</div><div class="a" style="left:2410px;top:1011px;font-size:12px;color:#a3a6a8">UTF-8</div><div class="a" style="left:2456px;top:1011px;font-size:12px;color:#a3a6a8">2 spaces</div>
<svg style="left:2518px;top:1014px" width="12" height="13"><path d="M2 6V3a2.500 2.500 0 0 1 5 0" fill="none" stroke="#a6a9ab" stroke-width="1.200"/><rect x="4" y="6" width="7" height="6" fill="#a6a9ab"/></svg>
<div class="a" style="left:2060px;top:977px;font-size:25px;line-height:28px;color:#dedede;text-shadow:1px 1px 1px #222">掘金技术社区 @ 王老实及其友伴的鸿蒙路</div>

<!-- annotations overlay -->
<svg style="left:0;top:0" width="2548" height="1033" viewBox="0 0 2548 1033">
<path d="M869 297C878 315 890 325 895 340C899 347 901 348 902 354C900 358 898 358 899 362C902 368 903 372 902 385C901 400 900 412 900 424C895 430 888 437 881 438C877 438 874 436 871 433" fill="none" stroke="#e8201a" stroke-width="3.600" stroke-linecap="round" stroke-linejoin="round"/>
<path d="M1238 451L1897 371L1896 366L1912 373L1898 380L1898 374.500L1240 451.800z" fill="#e8261c"/>
<path d="M2005 358L2060 355.500L2056 352L2068 359L2056 366L2060 361.500z" fill="#ee2211"/>
<path d="M2135 357L2187 354L2183 350L2195 357L2183 364L2187 359.500z" fill="#ee2211"/>
</svg>

<!-- sticker -->
<svg style="left:1340px;top:180px" width="300" height="240" viewBox="0 0 900 720">
<defs><linearGradient id="mg" x1="0" y1="0" x2="1" y2="1"><stop offset="0" stop-color="#f4c36a"/><stop offset="1" stop-color="#eeb04f"/></linearGradient></defs>
<path d="M285 130C320 75 390 75 430 120V70H470V122C560 135 640 210 672 290C680 340 650 380 645 430C650 480 690 510 715 570C730 630 690 665 620 675C540 690 440 670 370 630C290 585 240 520 222 440C205 360 225 260 285 195z" fill="#fff" stroke="#fff" stroke-width="30" stroke-linejoin="round"/>
<g font-family="Noto Sans CJK SC" font-weight="900" font-size="170" stroke-linejoin="round">
<text x="95" y="225" fill="#fff" stroke="#fff" stroke-width="34">好</text>
<text x="630" y="232" fill="#fff" stroke="#fff" stroke-width="34">芒</text>
<text x="95" y="225" fill="#0a0a0a" stroke="#0a0a0a" stroke-width="8">好</text>
<text x="630" y="232" fill="#0a0a0a" stroke="#0a0a0a" stroke-width="8">芒</text>
</g>
<path d="M285 130C320 80 390 80 430 125C390 145 340 150 305 165z" fill="#8cc251" stroke="#0a0a0a" stroke-width="9" stroke-linejoin="round"/>
<rect x="438" y="72" width="26" height="60" rx="4" fill="#8f6f42" stroke="#0a0a0a" stroke-width="8"/>
<path d="M450 132C550 140 640 215 668 300C672 345 645 380 640 430C645 480 685 510 710 570C720 625 680 655 620 665C540 680 440 660 375 622C300 580 250 515 232 440C215 350 240 250 300 190C340 150 400 130 450 132z" fill="url(#mg)" stroke="#0a0a0a" stroke-width="14" stroke-linejoin="round"/>
<path d="M305 420C305 340 370 245 470 240C540 240 570 280 585 315C600 345 625 370 615 405C600 460 540 490 460 498C430 502 400 495 385 485z" fill="#c8a67c" stroke="#0a0a0a" stroke-width="11" stroke-linejoin="round"/>
<rect x="453" y="355" width="77" height="87" rx="30" fill="#a98864"/>
<path d="M412 347l28 15M552 340l-28 15M472 368l20 14 18-16M492 382v40" fill="none" stroke="#0a0a0a" stroke-width="9" stroke-linecap="round"/>
<path d="M310 425C340 420 365 445 375 470C395 490 390 535 360 555C325 575 285 550 272 510C265 470 285 440 310 425z" fill="#a97f5b" stroke="#0a0a0a" stroke-width="11"/>
<path d="M360 490C372 475 378 465 372 460" fill="none" stroke="#0a0a0a" stroke-width="8" stroke-linecap="round"/>
<path d="M322 295C340 320 352 335 345 350C335 368 305 368 297 348C292 330 310 310 322 295z" fill="#85c5ee" stroke="#3f8fd0" stroke-width="8"/>
</svg>
</body></html>
